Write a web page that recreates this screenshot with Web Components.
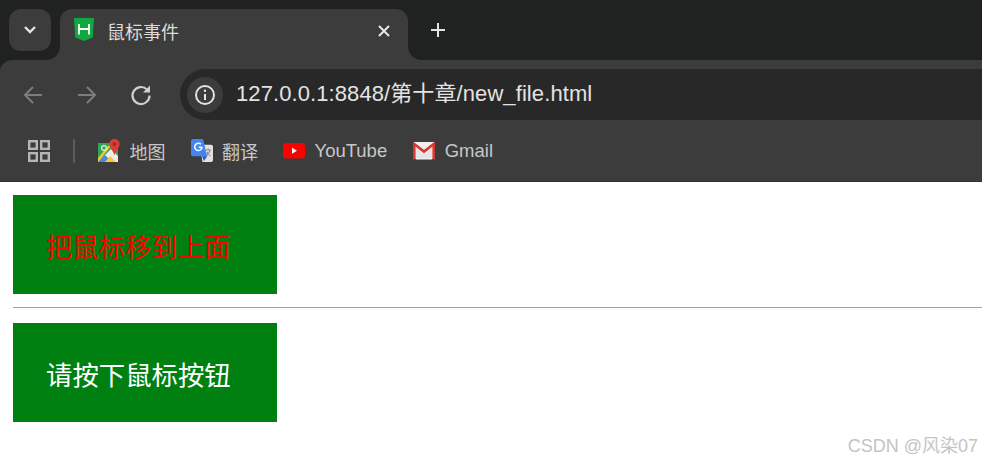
<!DOCTYPE html>
<html lang="zh"><head><meta charset="utf-8"><title>鼠标事件</title>
<style>
html,body{margin:0;padding:0;height:463px;overflow:hidden;background:#fff;font-family:"Liberation Sans","Noto Sans CJK SC",sans-serif}
</style></head><body>
<browser-chrome>
  <bookmark-item label="地图" style="font-size:18px"><svg viewBox="0 0 22 24" width="22" height="24"><path d="M0 4h20v19H0z" fill="#35a455"/><path d="M0 23 13 10l7 7v6z" fill="#ececec"/><path d="M0 23l7-7 7 7z" fill="#4a86e8"/><path d="M0 19 10 7h3L0 23z" fill="#fbc52b"/><path d="M7 23l5-6 6 6z" fill="#f6c93a"/><circle cx="6" cy="9" r="2.400" fill="none" stroke="#d8efdd" stroke-width="1.300"/><path d="M16.500 0c-3 0-5.200 2.300-5.200 5 0 3.600 3.800 6 5.200 11.500C17.900 11 21.700 8.600 21.700 5c0-2.700-2.200-5-5.200-5z" fill="#dc3c34"/><circle cx="16.500" cy="5" r="1.900" fill="#a32a26"/></svg></bookmark-item>
  <bookmark-item label="翻译" style="font-size:18px"><svg viewBox="0 0 23 25" width="22" height="24"><path d="M9 6h12a2 2 0 0 1 2 2v14a2 2 0 0 1-2 2H12z" fill="#e2e2e2"/><path d="M2 0h10.500l4.500 18H2a2 2 0 0 1-2-2V2a2 2 0 0 1 2-2z" fill="#4285f4"/><path d="M11.500 18H17l-3.500 5z" fill="#2a56c6"/><path d="M15.500 11.500h5.500M18 10v1.500M20 11.500c-.5 2.500-2 4.500-4 6M16.500 13.500c.8 1.500 2.200 3 4 4" stroke="#8c8c8c" stroke-width="1.200" fill="none"/><path d="M11.500 8.200a3.800 3.800 0 1 1-1.100-2.700" fill="none" stroke="#fff" stroke-width="1.600"/><path d="M8 8.500h3.500" stroke="#fff" stroke-width="1.400"/></svg></bookmark-item>
  <bookmark-item label="YouTube"><svg viewBox="0 0 22 16" width="22" height="16"><rect y="0" width="22" height="15.500" rx="3.500" fill="#f00"/><path d="M9 4.700v6l5-3z" fill="#fff"/></svg></bookmark-item>
  <bookmark-item label="Gmail" style="margin-left:1px"><svg viewBox="0 0 22 18" width="22" height="18"><rect x="1" y="0" width="20" height="17" fill="#f0f0f0"/><path d="M3 3l8 6 8-6v13H3z" fill="#e6e6e6"/><path d="M1.300 17.500V2L11 9.500 20.700 2v15.500" fill="none" stroke="#d8392f" stroke-width="2.600"/><path d="M3 17.500h16" stroke="#9a9a9a" stroke-width="1"/></svg></bookmark-item>
</browser-chrome>
<demo-page>
  <demo-box color="#f00">把鼠标移到上面</demo-box>
  <demo-rule></demo-rule>
  <demo-box color="#fff">请按下鼠标按钮</demo-box>
</demo-page>
<water-mark>CSDN @风染07</water-mark>
<script>
function def(name,html){customElements.define(name,class extends HTMLElement{
  constructor(){super();this.attachShadow({mode:'open'}).innerHTML=html;}
  connectedCallback(){
    const l=this.getAttribute('label');if(l)this.shadowRoot.querySelector('.l').textContent=l;
    const c=this.getAttribute('color');if(c)this.style.color=c;
  }
});}
def('browser-chrome',`<style>
:host{display:block;height:182px;background:#202221;color:#ddd;font-family:"Liberation Sans","Noto Sans CJK SC",sans-serif}
.strip{height:60px;display:flex;align-items:flex-start;padding:9px 0 0 9px;box-sizing:border-box}
.menu{width:42px;height:42px;border-radius:12px;background:#3c3c3c;display:flex;align-items:center;justify-content:center;margin-right:9px}
.tab{position:relative;width:348px;height:51px;background:#3c3c3c;border-radius:12px 12px 0 0;display:flex;align-items:flex-start;box-sizing:border-box;padding:9px 17px 0 14px}
.tab::before,.tab::after{content:"";position:absolute;bottom:0;width:13px;height:13px}
.tab::before{left:-13px;background:radial-gradient(circle at 0 0,transparent 12.500px,#3c3c3c 13px)}
.tab::after{right:-13px;background:radial-gradient(circle at 100% 0,transparent 12.500px,#3c3c3c 13px)}
.fav{margin-right:14px;flex:none;margin-top:0}
.title{flex:1;font-size:18px;line-height:26px;color:#dcdcdc;margin-top:2px;margin-left:-1px}
.x{margin-top:6px}
.plus{margin:13px 0 0 22px}
.tools{height:70px;background:#3c3c3c;border-top-left-radius:12px;display:flex;align-items:center;padding:0 0 0 21px;box-sizing:border-box}
.tools svg{flex:none}
.back{margin-right:30px}.fwd{margin-right:30px}.reload{margin-right:27px}
.addr{flex:1;height:51px;background:#282828;border-radius:26px 0 0 26px;display:flex;align-items:center;padding-left:7px;margin-top:-1px}
.info{width:36px;height:36px;border-radius:50%;background:#3c3c3c;display:flex;align-items:center;justify-content:center;margin-right:13px}
.url{font-size:22px;line-height:26px;color:#e3e3e3;letter-spacing:.09px;white-space:nowrap;margin-top:-2px}
.bm{height:52px;background:#3c3c3c;display:flex;align-items:center;padding:0 0 10px 28px;box-sizing:border-box;border-bottom:1px solid #333}
.sep{width:2px;height:24px;background:#5c5c5c;margin:0 23px 0 23px;border-radius:1px}
.items{display:flex;align-items:center;gap:25px}
</style>
<div class="strip">
  <div class="menu"><svg width="14" height="10" viewBox="0 0 14 10"><path d="M2 2l5 5 5-5" fill="none" stroke="#e3e3e3" stroke-width="2.400"/></svg></div>
  <div class="tab">
    <svg class="fav" width="20" height="23" viewBox="0 0 20 23"><path d="M0 0h20l-1.200 19.500L10 23 1.200 19.500z" fill="#0fa73f"/><path d="M5 6v10.500M15 6v10.500M5 11h10" stroke="#fff" stroke-width="1.800" fill="none"/></svg>
    <span class="title">鼠标事件</span>
    <svg class="x" width="14" height="14" viewBox="0 0 14 14"><path d="M2 2l10 10M12 2 2 12" stroke="#e8e8e8" stroke-width="2"/></svg>
  </div>
  <svg class="plus" width="16" height="16" viewBox="0 0 16 16"><path d="M8 1v14M1 8h14" stroke="#e3e3e3" stroke-width="2"/></svg>
</div>
<div class="tools">
  <svg class="back" width="24" height="24" viewBox="0 0 24 24"><path d="M21 12H4M12 4l-8 8 8 8" fill="none" stroke="#7d7d7d" stroke-width="2"/></svg>
  <svg class="fwd" width="24" height="24" viewBox="0 0 24 24"><path d="M3 12h17M12 4l8 8-8 8" fill="none" stroke="#7d7d7d" stroke-width="2"/></svg>
  <svg class="reload" width="24" height="24" viewBox="0 0 24 24"><path d="M20.500 12.500A8.500 8.500 0 1 1 18 6.500" fill="none" stroke="#d0d0d0" stroke-width="2.200"/><path d="M21 2.500V9.500H14z" fill="#d0d0d0"/></svg>
  <div class="addr">
    <div class="info"><svg width="22" height="22" viewBox="0 0 22 22"><circle cx="11" cy="11" r="9" fill="none" stroke="#e3e3e3" stroke-width="2"/><path d="M11 10v6" stroke="#e3e3e3" stroke-width="2"/><circle cx="11" cy="6.800" r="1.200" fill="#e3e3e3"/></svg></div>
    <span class="url">127.0.0.1:8848/第十章/new_file.html</span>
  </div>
</div>
<div class="bm">
  <svg width="22" height="22" viewBox="0 0 22 22"><g fill="none" stroke="#b5b5b5" stroke-width="2.400"><rect x="1.200" y="1.200" width="7.600" height="7.600"/><rect x="13.200" y="1.200" width="7.600" height="7.600"/><rect x="1.200" y="13.200" width="7.600" height="7.600"/><rect x="13.200" y="13.200" width="7.600" height="7.600"/></g></svg>
  <div class="sep"></div>
  <div class="items"><slot></slot></div>
</div>`);
def('bookmark-item',`<style>
:host{display:flex;align-items:center;gap:9.500px;font-size:18.500px;color:#c7c7c7;font-family:"Liberation Sans","Noto Sans CJK SC",sans-serif}
::slotted(svg){flex:none}
</style><slot></slot><span class="l"></span>`);
def('demo-page',`<style>:host{display:block;padding:13px 0 0 13px}</style><slot></slot>`);
def('demo-box',`<style>
:host{display:flex;align-items:center;width:264px;height:99px;box-sizing:border-box;padding:2px 0 0 33px;background:#008011;font-size:26.400px;font-family:"Noto Sans CJK SC",sans-serif}
</style><slot></slot>`);
def('demo-rule',`<style>:host{display:block;height:1px;border-top:1px solid #a0a0a0;margin:13px 0 14px}</style>`);
def('water-mark',`<style>
:host{position:absolute;right:4px;top:434px;font-size:18px;line-height:24px;color:#c4c4c4;font-family:"Liberation Sans","Noto Sans CJK SC",sans-serif}
</style><slot></slot>`);
</script>
</body></html>
